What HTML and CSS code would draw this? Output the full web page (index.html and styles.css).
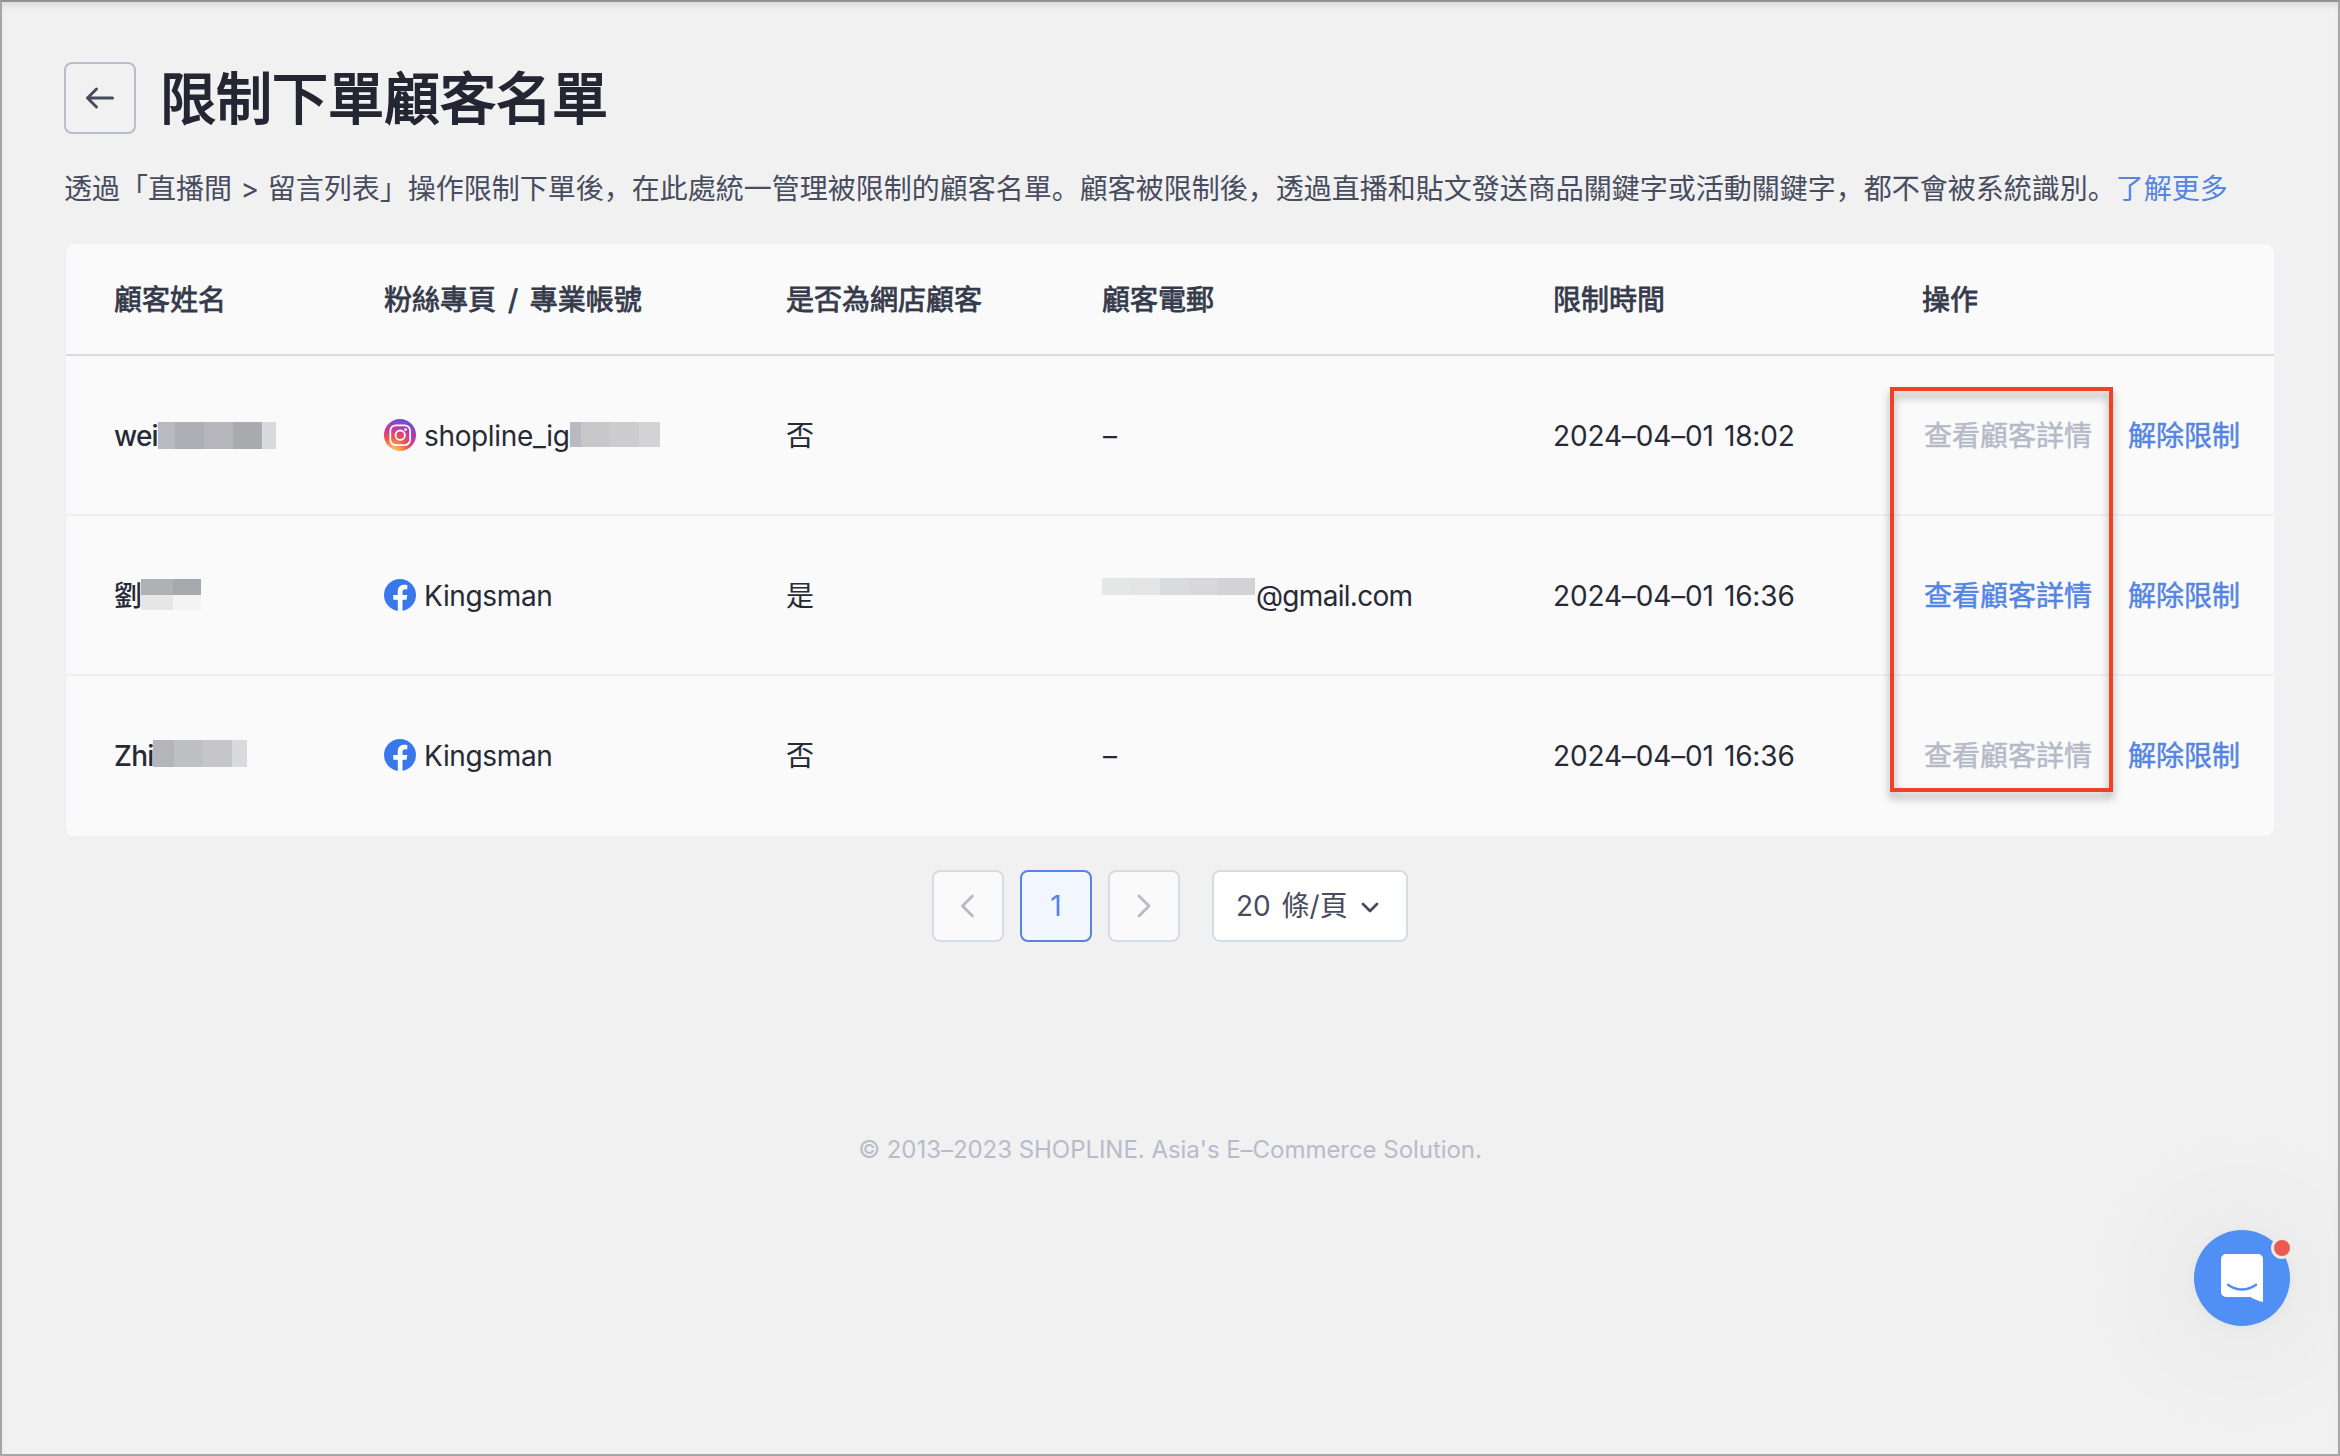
FILE: index.html
```html
<!DOCTYPE html>
<html lang="zh-Hans">
<head>
<meta charset="UTF-8">
<meta name="viewport" content="width=device-width, initial-scale=1.0">
<title>限制下單顧客名單</title>
<link rel="stylesheet" href="styles.css">
</head>
<body>
<div class="page">
  <header class="page-header">
    <button class="back-btn" aria-label="back">
      <svg width="32" height="32" viewBox="0 0 32 32" fill="none" stroke="#474c5e" stroke-width="3" stroke-linecap="round" stroke-linejoin="round">
        <path d="M28.500 16H4M12.500 7L3.500 16l9 9"/>
      </svg>
    </button>
    <h1 class="title">限制下單顧客名單</h1>
  </header>
  <p class="desc">透過「直播間 &gt; 留言列表」操作限制下單後，在此處統一管理被限制的顧客名單。顧客被限制後，透過直播和貼文發送商品關鍵字或活動關鍵字，都不會被系統識別。<a class="link" href="#">了解更多</a></p>

  <div class="card">
    <table class="table">
      <colgroup>
        <col class="col-name">
        <col class="col-account">
        <col class="col-member">
        <col class="col-email">
        <col class="col-time">
        <col class="col-action">
      </colgroup>
      <thead>
        <tr>
          <th>顧客姓名</th>
          <th>粉絲專頁 / 專業帳號</th>
          <th>是否為網店顧客</th>
          <th>顧客電郵</th>
          <th>限制時間</th>
          <th>操作</th>
        </tr>
      </thead>
      <tbody>
        <tr>
          <td><div class="cell name"><span>wei</span><i class="mask mask-wei"></i></div></td>
          <td>
            <div class="cell">
              <svg class="social" viewBox="0 0 32 32">
                <defs>
                  <radialGradient id="ig" cx="0.28" cy="1.05" r="1.05">
                    <stop offset="0" stop-color="#fcd56b"/>
                    <stop offset="0.2" stop-color="#f9a957"/>
                    <stop offset="0.45" stop-color="#ee5548"/>
                    <stop offset="0.75" stop-color="#c236a8"/>
                    <stop offset="1" stop-color="#6a50cf"/>
                  </radialGradient>
                </defs>
                <circle cx="16" cy="16" r="16" fill="url(#ig)"/>
                <g fill="none" stroke="#fff" stroke-width="1.800">
                  <rect x="6.300" y="6.300" width="19.800" height="19.800" rx="5.500"/>
                  <circle cx="16.200" cy="16.200" r="4.700"/>
                </g>
                <circle cx="21.600" cy="10.600" r="1.300" fill="#fff"/>
              </svg>
              <span class="shop">shopline_ig</span><i class="mask mask-ig"></i>
            </div>
          </td>
          <td><div class="cell">否</div></td>
          <td><div class="cell dash">–</div></td>
          <td><div class="cell time">2024–04–01 18:02</div></td>
          <td><div class="cell actions"><a class="action disabled">查看顧客詳情</a><a class="action" href="#">解除限制</a></div></td>
        </tr>
        <tr>
          <td><div class="cell name"><span>劉</span><i class="mask mask-liu"></i></div></td>
          <td>
            <div class="cell">
              <svg class="social" viewBox="0 0 32 32">
                <circle cx="16" cy="16" r="16" fill="#3b77ec"/>
                <path fill="#fff" d="M13.800 32V20.800H9.300v-4.700h4.500v-3.700c0-4.400 2.600-6.600 6.500-6.600 1.200 0 2.400.1 3 .3v4.100h-2c-2 0-2.800 1-2.800 2.500v3.400h4.800l-.8 4.700h-4V32z"/>
              </svg>
              <span class="shop">Kingsman</span>
            </div>
          </td>
          <td><div class="cell">是</div></td>
          <td><div class="cell"><i class="mask mask-mail"></i><span class="mail">@gmail.com</span></div></td>
          <td><div class="cell time">2024–04–01 16:36</div></td>
          <td><div class="cell actions"><a class="action" href="#">查看顧客詳情</a><a class="action" href="#">解除限制</a></div></td>
        </tr>
        <tr>
          <td><div class="cell name"><span>Zhi</span><i class="mask mask-zhi"></i></div></td>
          <td>
            <div class="cell">
              <svg class="social" viewBox="0 0 32 32">
                <circle cx="16" cy="16" r="16" fill="#3b77ec"/>
                <path fill="#fff" d="M13.800 32V20.800H9.300v-4.700h4.500v-3.700c0-4.400 2.600-6.600 6.500-6.600 1.200 0 2.400.1 3 .3v4.100h-2c-2 0-2.800 1-2.800 2.500v3.400h4.800l-.8 4.700h-4V32z"/>
              </svg>
              <span class="shop">Kingsman</span>
            </div>
          </td>
          <td><div class="cell">否</div></td>
          <td><div class="cell dash">–</div></td>
          <td><div class="cell time">2024–04–01 16:36</div></td>
          <td><div class="cell actions"><a class="action disabled">查看顧客詳情</a><a class="action" href="#">解除限制</a></div></td>
        </tr>
      </tbody>
    </table>
    <div class="highlight"></div>
  </div>

  <nav class="pagination">
    <button class="page-btn" aria-label="prev">
      <svg width="28" height="28" viewBox="0 0 28 28" fill="none" stroke="#b5bac9" stroke-width="2.800" stroke-linecap="round" stroke-linejoin="round"><path d="M18.500 4L8.500 14l10 10"/></svg>
    </button>
    <button class="page-btn active">1</button>
    <button class="page-btn" aria-label="next">
      <svg width="28" height="28" viewBox="0 0 28 28" fill="none" stroke="#b5bac9" stroke-width="2.800" stroke-linecap="round" stroke-linejoin="round"><path d="M9 4l10 10L9 24"/></svg>
    </button>
    <button class="page-size">
      <span>20 條/頁</span>
      <svg width="20" height="20" viewBox="0 0 20 20" fill="none" stroke="#474c5e" stroke-width="2.800" stroke-linecap="round" stroke-linejoin="round"><path d="M3 8l7 7 7-7"/></svg>
    </button>
  </nav>

  <footer class="footer">© 2013–2023 SHOPLINE. Asia's E–Commerce Solution.</footer>

  <div class="chat">
    <svg width="42" height="48" viewBox="0 0 42 48">
      <path fill="#fff" d="M5 0h32a5 5 0 0 1 5 5v43c-4.500-.8-8.500-2.600-12.500-5H5a5 5 0 0 1-5-5V5a5 5 0 0 1 5-5z"/>
      <path fill="none" stroke="#508ff3" stroke-width="2.400" stroke-linecap="round" d="M7 30.700c8.500 6.300 19.500 6.300 28 0"/>
    </svg>
    <span class="dot"></span>
  </div>
</div>
</body>
</html>
```
FILE: styles.css
```css
* {
  box-sizing: border-box;
}
body {
  margin: 0;
  background: #f1f1f1;
  color: #272a36;
  font-family: Inter, "Noto Sans CJK SC", sans-serif;
  font-size: 28px;
  line-height: 40px;
}
button {
  padding: 0;
  font: inherit;
}
a {
  color: #5485e2;
  text-decoration: none;
}
.page {
  position: relative;
  width: 2340px;
  height: 1456px;
  padding: 60px 62px 0;
  border: 2px solid #a6a6a6;
  border-top-color: #929292;
  overflow: hidden;
  box-shadow: inset 0 6px 8px -4px rgba(0, 0, 0, 0.12);
}

/* header */
.page-header {
  display: flex;
  align-items: center;
  gap: 24px;
  height: 72px;
}
.back-btn {
  display: flex;
  align-items: center;
  justify-content: center;
  width: 72px;
  height: 72px;
  border: 2px solid #b7becd;
  border-radius: 8px;
  background: transparent;
}
.title {
  margin: 0;
  color: #242733;
  font-size: 56px;
  font-weight: 400;
  line-height: 72px;
  padding-top: 1px;
  -webkit-text-stroke: 1.8px #242733;
}
.desc {
  height: 40px;
  margin: 35px 0 33px;
  color: #474c5e;
  white-space: nowrap;
  word-spacing: 0.7px;
}

/* table */
.card {
  position: relative;
  width: 2212px;
  border: 2px solid #efeff5;
  border-radius: 10px;
  background: #fafafa;
}
.table {
  width: 100%;
  table-layout: fixed;
  border-collapse: separate;
  border-spacing: 0;
}
.col-name { width: 270px; }
.col-account { width: 402px; }
.col-member { width: 316px; }
.col-email { width: 451px; }
.col-time { width: 369px; }
.col-action { width: 400px; }
th {
  height: 112px;
  padding: 1px 0 0 48px;
  border-bottom: 2px solid #d4dde6;
  color: #353a4b;
  font-weight: 400;
  text-align: left;
  white-space: nowrap;
  word-spacing: 4px;
  -webkit-text-stroke: 0.8px #353a4b;
}
td {
  height: 160px;
  padding: 2px 0 0 48px;
  border-bottom: 2px solid #efeff5;
}
tbody tr:last-child td {
  border-bottom-color: transparent;
}
.cell {
  display: flex;
  align-items: center;
  height: 40px;
  white-space: nowrap;
}
.name {
  font-weight: 500;
  letter-spacing: -0.8px;
}
.social {
  width: 32px;
  height: 32px;
  margin: 0 8px 2px 0;
}
.shop {
  letter-spacing: -0.35px;
}
.mail {
  letter-spacing: -0.7px;
}
.dash {
  padding-left: 1px;
}
.time {
  letter-spacing: -0.15px;
  word-spacing: 2.4px;
}
.actions {
  gap: 36px;
  padding-left: 2px;
}
.action {
  -webkit-text-stroke: 0.5px #5485e2;
}
.disabled {
  color: #b5bac9;
  -webkit-text-stroke-color: #b5bac9;
}

/* mosaic over private data */
.mask {
  flex: none;
  margin-bottom: 2px;
}
.mask-wei {
  width: 118px;
  height: 27px;
  background: linear-gradient(90deg, #b9babf 17px, #aeafb4 17px 46px, #b7b6bc 46px 75px, #aaabaf 75px 104px, #d9dadc 104px);
}
.mask-ig {
  width: 90px;
  height: 25px;
  margin-bottom: 4px;
  background: linear-gradient(90deg, #b9babf 11px, #c8c8ca 11px 40px, #cdcdcf 40px 69px, #d3d3d5 69px);
}
.mask-liu {
  width: 60px;
  height: 31px;
  margin-bottom: 4px;
  background:
    linear-gradient(90deg, #b0b1b5 32px, #a7a8ab 32px) 0 0 / 100% 16px no-repeat,
    linear-gradient(90deg, #e6e6e7 32px, #f3f3f4 32px);
}
.mask-zhi {
  width: 94px;
  height: 27px;
  margin-bottom: 5px;
  background: linear-gradient(90deg, #b4b5b9 21px, #bfc0c2 21px 50px, #c6c6c8 50px 79px, #d9dadb 79px);
}
.mask-mail {
  width: 153px;
  height: 17px;
  margin: 0 1px 19px 0;
  background: linear-gradient(90deg, #e5e7e7 29px, #e4e4e5 29px 58px, #dadbdd 58px 87px, #d8d8da 87px 116px, #d3d3d5 116px);
}

/* frame drawn over the action column */
.highlight {
  position: absolute;
  top: 143px;
  left: 1824px;
  width: 223px;
  height: 405px;
  border: 4px solid #ee4127;
  filter: drop-shadow(0 6px 4px rgba(0, 0, 0, 0.35));
}

/* pagination */
.pagination {
  display: flex;
  justify-content: center;
  gap: 16px;
  margin-top: 32px;
}
.page-btn {
  display: flex;
  align-items: center;
  justify-content: center;
  width: 72px;
  height: 72px;
  border: 2px solid #d4dde6;
  border-radius: 8px;
  background: #fafafa;
}
.page-btn.active {
  border-color: #5485e2;
  background: #f2f7ff;
  color: #5485e2;
}
.page-size {
  display: flex;
  align-items: center;
  justify-content: space-between;
  width: 196px;
  height: 72px;
  margin-left: 16px;
  padding: 0 26px 0 22px;
  border: 2px solid #d4dde6;
  border-radius: 8px;
  background: #fff;
  color: #474c5e;
  word-spacing: 3px;
}

.footer {
  margin-top: 188px;
  color: #b7bccb;
  font-size: 24px;
  letter-spacing: -0.04px;
  text-align: center;
}

/* chat launcher */
.chat {
  position: absolute;
  right: 48px;
  bottom: 128px;
  display: flex;
  justify-content: center;
  width: 96px;
  height: 96px;
  padding-top: 24px;
  border-radius: 50%;
  background: #508ff3;
  box-shadow: 0 2px 12px rgba(0, 0, 0, 0.04), 0 4px 140px rgba(0, 0, 0, 0.12);
}
.dot {
  position: absolute;
  top: 7px;
  right: -3px;
  width: 22px;
  height: 22px;
  border: 3px solid #ececec;
  border-radius: 50%;
  background: #eb5b52;
}
```
